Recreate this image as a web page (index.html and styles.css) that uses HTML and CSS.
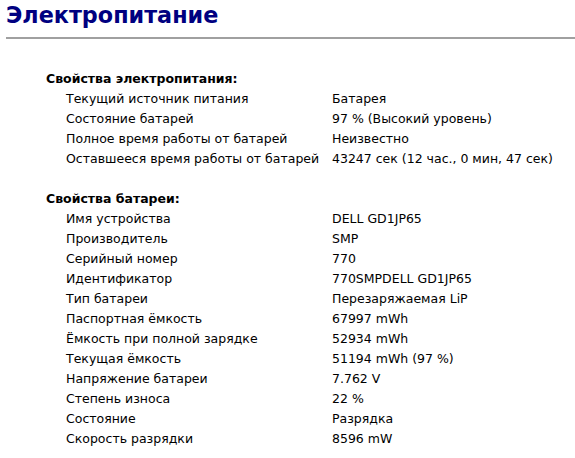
FILE: index.html
```html
<!DOCTYPE html>
<html lang="ru">
<head>
<meta charset="utf-8">
<title>Электропитание</title>
<link rel="stylesheet" href="styles.css">
</head>
<body>
<h1 class="title">Электропитание</h1>
<hr class="rule">
<div class="props">
  <div class="head">Свойства электропитания:</div>
  <div class="label">Текущий источник питания</div><div class="value">Батарея</div>
  <div class="label">Состояние батарей</div><div class="value">97 % (Высокий уровень)</div>
  <div class="label">Полное время работы от батарей</div><div class="value">Неизвестно</div>
  <div class="label">Оставшееся время работы от батарей</div><div class="value">43247 сек (12 час., 0 мин, 47 сек)</div>
  <div class="gap"></div>
  <div class="head">Свойства батареи:</div>
  <div class="label">Имя устройства</div><div class="value">DELL GD1JP65</div>
  <div class="label">Производитель</div><div class="value">SMP</div>
  <div class="label">Серийный номер</div><div class="value">770</div>
  <div class="label">Идентификатор</div><div class="value">770SMPDELL GD1JP65</div>
  <div class="label">Тип батареи</div><div class="value">Перезаряжаемая LiP</div>
  <div class="label">Паспортная ёмкость</div><div class="value">67997 mWh</div>
  <div class="label">Ёмкость при полной зарядке</div><div class="value">52934 mWh</div>
  <div class="label">Текущая ёмкость</div><div class="value">51194 mWh (97 %)</div>
  <div class="label">Напряжение батареи</div><div class="value">7.762 V</div>
  <div class="label">Степень износа</div><div class="value">22 %</div>
  <div class="label">Состояние</div><div class="value">Разрядка</div>
  <div class="label">Скорость разрядки</div><div class="value">8596 mW</div>
</div>
</body>
</html>
```
FILE: styles.css
```css
html, body {
  margin: 0;
  padding: 0;
  background: #ffffff;
}
body {
  font-family: "DejaVu Sans", Verdana, sans-serif;
  font-size: 12.5px;
  color: #000000;
}
.title {
  margin: 0;
  padding: 2px 0 0 6px;
  font-size: 22.3px;
  font-weight: bold;
  color: #000080;
  line-height: 26px;
}
.rule {
  margin: 9px 0 0 6px;
  border: 0;
  height: 2px;
  background: #a0a0a0;
}
.props {
  display: grid;
  grid-template-columns: 266px auto;
  grid-auto-rows: 20px;
  line-height: 20px;
  margin: 30px 0 0 46px;
  white-space: nowrap;
}
.head {
  grid-column: 1 / -1;
  font-weight: bold;
}
.gap {
  grid-column: 1 / -1;
}
.label {
  padding-left: 20px;
}
.value {
  padding-left: 20px;
}
```
